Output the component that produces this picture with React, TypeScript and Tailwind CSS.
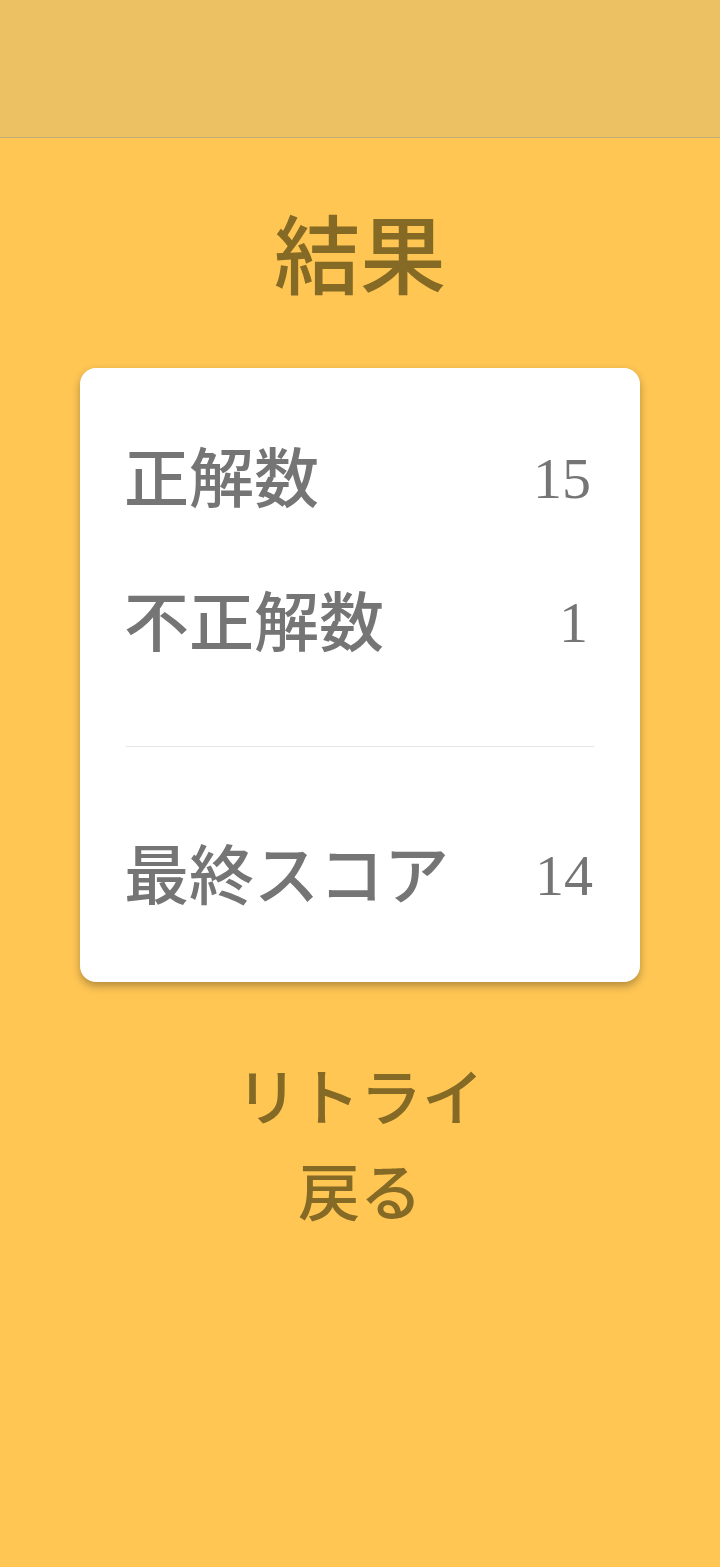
export default function App() {
  return (
    <div className="min-h-[1567px] bg-[#ffc654] flex flex-col items-center font-['Noto_Sans_CJK_JP',sans-serif]">
      <div className="w-full h-[138px] bg-[#ecc163] border-b border-[#c2ad78]" />
      <h1 className="mt-[63px] h-[100px] text-[86px] leading-[100px] font-medium text-[#856a26]">結果</h1>
      <div className="mt-[67px] w-[560px] h-[614px] bg-white rounded-2xl shadow-[0_4px_8px_rgba(0,0,0,0.3)] px-[46px] pt-[67px] text-[#757575] flex flex-col">
        <div className="flex justify-between items-center h-[80px] text-[65px] font-medium"><span className="-ml-[2px]">正解数</span><span className="font-['Liberation_Serif',serif] font-normal text-[58px] pt-[6px] pr-[3px]">15</span></div>
        <div className="flex justify-between items-center h-[80px] mt-[64px] text-[65px] font-medium"><span className="-ml-[2px]">不正解数</span><span className="font-['Liberation_Serif',serif] font-normal text-[58px] pt-[6px] pr-[6px]">1</span></div>
        <div className="border-t border-[#e6e6e6] mt-[87px]" />
        <div className="flex justify-between items-center h-[80px] mt-[85px] text-[65px] font-medium whitespace-nowrap"><span className="-ml-[2px]">最終スコア</span><span className="font-['Liberation_Serif',serif] font-normal text-[58px] pt-[6px] pr-[1px]">14</span></div>
      </div>
      <div className="mt-[68px] text-[62px] leading-[88px] font-medium text-[#856a26]">リトライ</div>
      <div className="mt-[7px] text-[62px] leading-[88px] font-medium text-[#856a26]">戻る</div>
    </div>
  );
}
